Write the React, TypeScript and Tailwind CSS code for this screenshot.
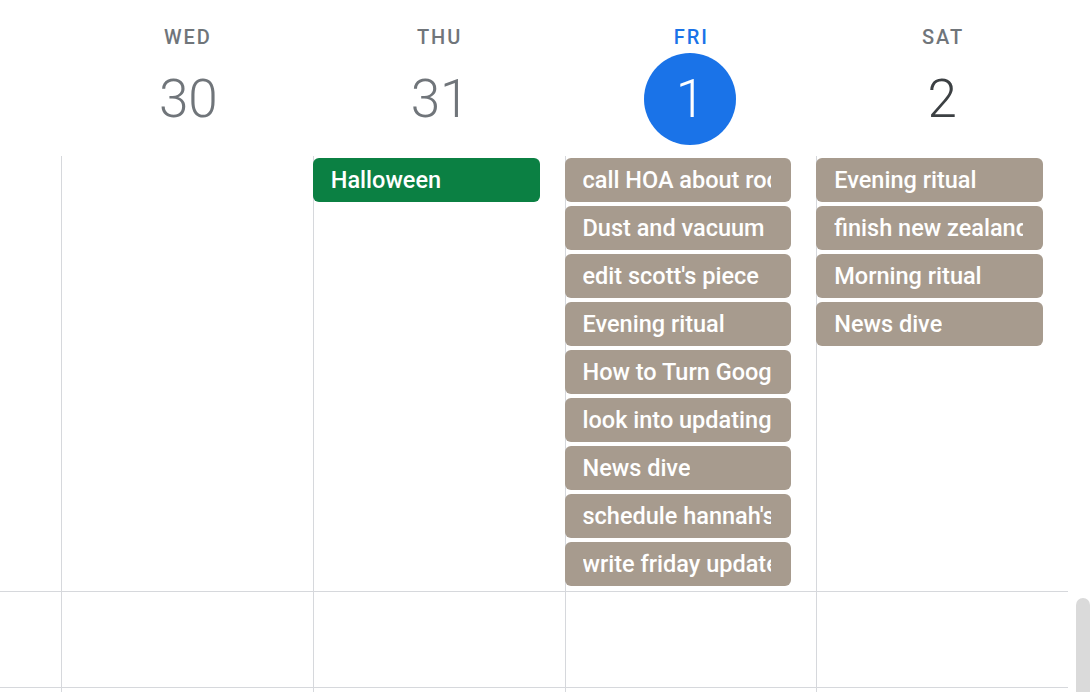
import React from "react";

type Day = { name: string; num: string; today?: boolean; dark?: boolean; events: { t: string; c: string }[] };

const G = "#a79b8e";
const days: Day[] = [
  { name: "WED", num: "30", events: [] },
  { name: "THU", num: "31", events: [{ t: "Halloween", c: "#0b8043" }] },
  {
    name: "FRI",
    num: "1",
    today: true,
    events: [
      { t: "call HOA about roof repair", c: G },
      { t: "Dust and vacuum", c: G },
      { t: "edit scott's piece", c: G },
      { t: "Evening ritual", c: G },
      { t: "How to Turn Google Calendar", c: G },
      { t: "look into updating website", c: G },
      { t: "News dive", c: G },
      { t: "schedule hannah's call", c: G },
      { t: "write friday update", c: G },
    ],
  },
  {
    name: "SAT",
    num: "2",
    dark: true,
    events: [
      { t: "Evening ritual", c: G },
      { t: "finish new zealand trip", c: G },
      { t: "Morning ritual", c: G },
      { t: "News dive", c: G },
    ],
  },
];

function Chip({ t, c }: { t: string; c: string }) {
  return (
    <div
      className="h-[44px] min-w-0 rounded-[6px] flex items-center pl-[18px] pr-[20px] mr-[25px] -ml-[1px]"
      style={{ backgroundColor: c }}
    >
      <span className="block min-w-0 overflow-hidden whitespace-nowrap text-white text-[23.5px] font-medium leading-[30px]">
        {t}
      </span>
    </div>
  );
}

const cols = "grid grid-cols-[61px_minmax(0,1fr)_minmax(0,1fr)_minmax(0,1fr)_minmax(0,1fr)]";

export default function App() {
  return (
    <div
      className="relative w-[1090px] h-[692px] overflow-hidden bg-white"
      style={{ fontFamily: "Roboto, 'Noto Sans', sans-serif" }}
    >
      <div className="w-[1068px] flex flex-col">
        {/* header */}
        <div className={`${cols} h-[156px]`}>
          <div />
          {days.map((d) => (
            <div key={d.name} className="flex flex-col items-center">
              <div
                className={`pt-[27px] pl-[2px] text-[20px] leading-[20px] font-medium tracking-[2px] ${
                  d.today ? "text-[#1a73e8]" : "text-[#70757a]"
                }`}
              >
                {d.name}
              </div>
              <div
                className={`mt-[6px] w-[92px] h-[92px] rounded-full flex items-center justify-center text-[53px] font-light leading-none ${
                  d.today
                    ? "bg-[#1a73e8] text-white"
                    : d.dark
                    ? "text-[#3c4043]"
                    : "text-[#70757a] pl-[3px]"
                }`}
              >
                {d.num}
              </div>
            </div>
          ))}
        </div>
        {/* all-day row */}
        <div className={`${cols} h-[436px] border-b border-[#d6d8dc]`}>
          <div />
          {days.map((d) => (
            <div key={d.name} className="min-w-0 border-l border-[#d6d8dc] pt-[2px] flex flex-col gap-[4px]">
              {d.events.map((e, i) => (
                <Chip key={i} t={e.t} c={e.c} />
              ))}
            </div>
          ))}
        </div>
        <div className={`${cols} h-[96px] border-b border-[#d6d8dc]`}>
          <div />
          {days.map((d) => (
            <div key={d.name} className="border-l border-[#d6d8dc]" />
          ))}
        </div>
        <div className={`${cols} h-[40px]`}>
          <div />
          {days.map((d) => (
            <div key={d.name} className="border-l border-[#d6d8dc]" />
          ))}
        </div>
      </div>
      <div className="absolute right-0 top-[598px] w-[14px] h-[120px] rounded-t-full bg-[#dadada]" />
    </div>
  );
}
